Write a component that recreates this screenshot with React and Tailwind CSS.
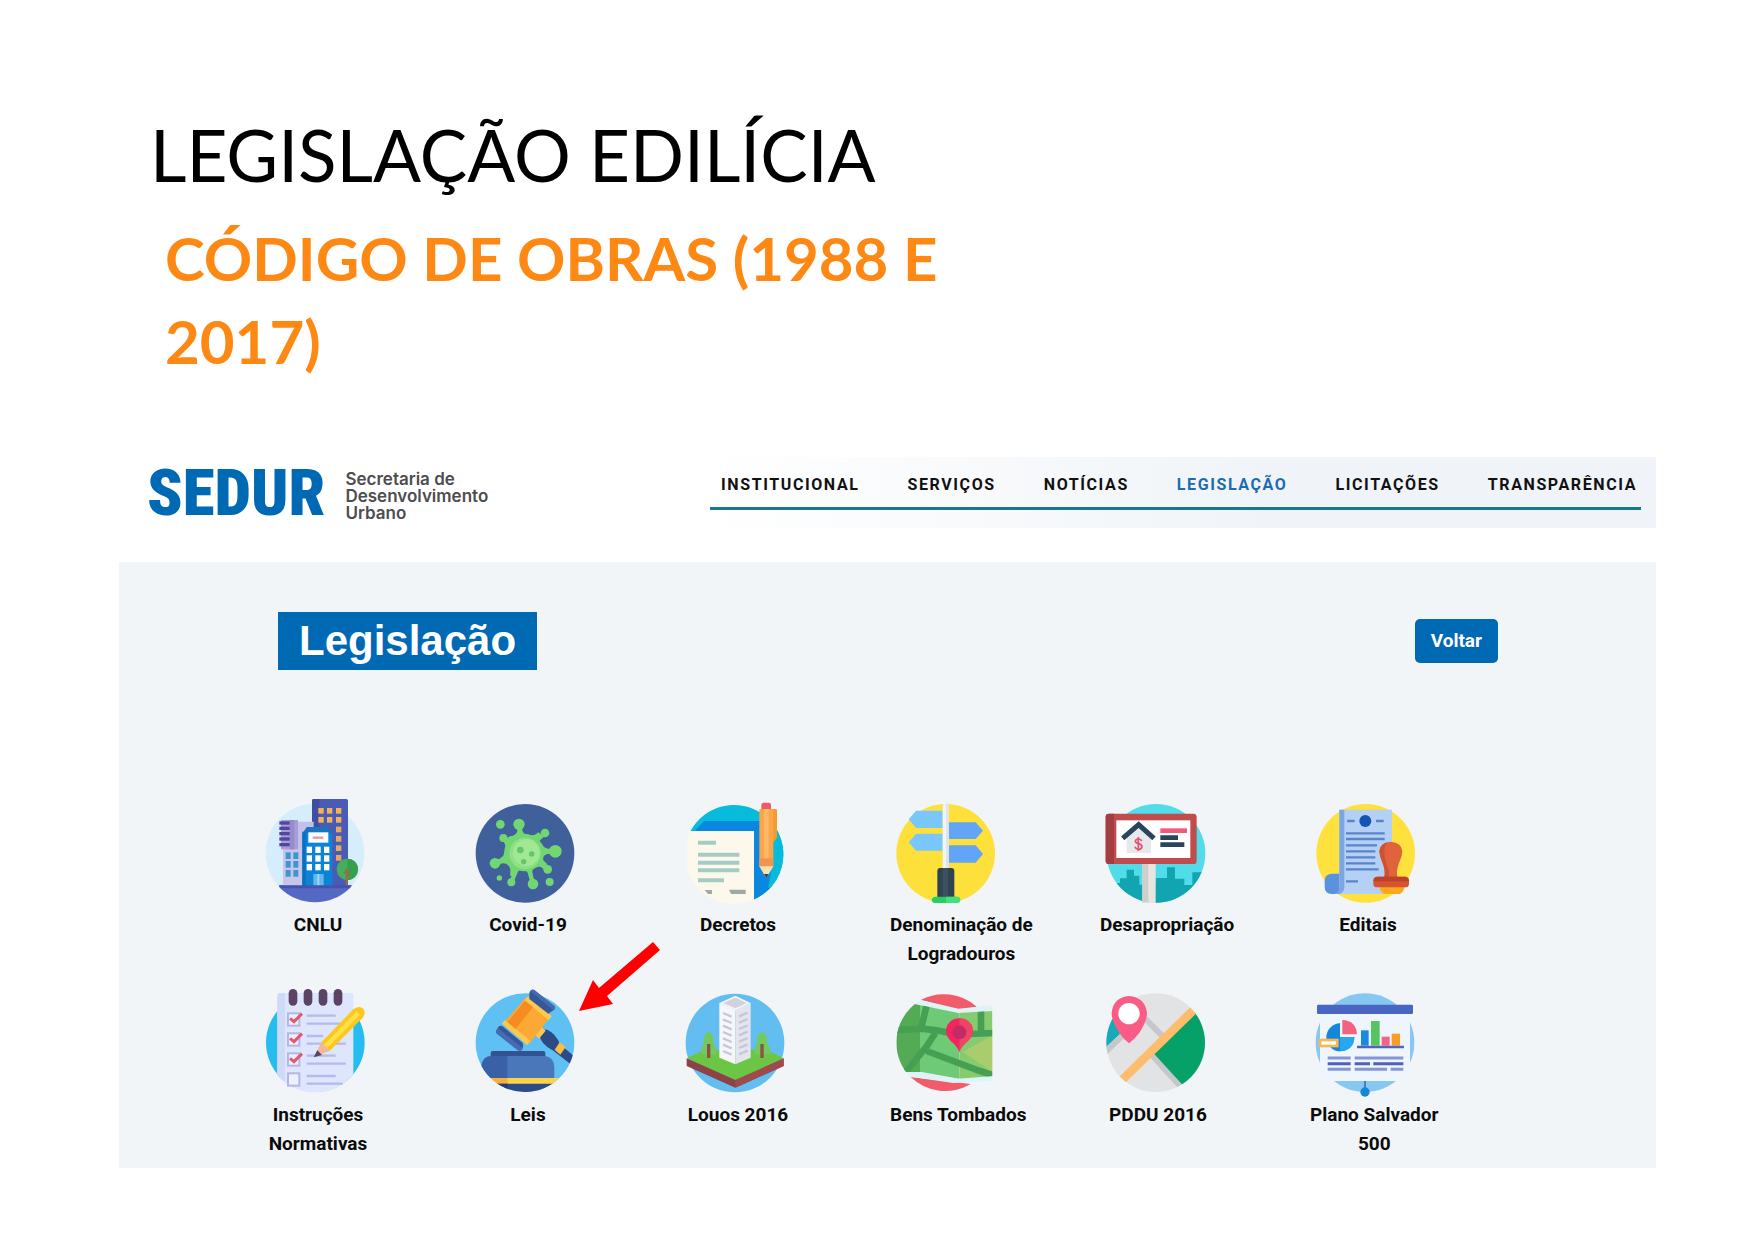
import React from "react";

function Icon({ box, children }) {
  return (
    <svg viewBox={box} className="ml-[5px] block size-[100px] overflow-visible" aria-hidden="true">
      {children}
    </svg>
  );
}

const grid = (xs, ys, w, h, fill) =>
  ys.flatMap((y) => xs.map((x) => <rect key={x + "-" + y} x={x} y={y} width={w} height={h} fill={fill} />));

function BuildingsIcon() {
  return (
    <Icon box="46 66 300 300">
      <clipPath id="cnlu"><circle cx="196" cy="216" r="148" /></clipPath>
      <circle cx="196" cy="216" r="148" fill="#d6edfb" />
      <rect x="88" y="313" width="218" height="60" fill="#5468c4" clipPath="url(#cnlu)" />
      <path d="M187 59q0-5 5-5h98q5 0 5 5v256H187z" fill="#4a5bb5" />
      <path d="M187 59q0-5 5-5h17v90h-22z" fill="#3f4da3" />
      {grid([206, 232, 259], [81, 108], 16, 17, "#f3b25a")}
      {grid([259], [137, 165, 193, 222], 16, 17, "#e8a860")}
      <path d="M145 122h47v192h-47z" fill="#c3bfe8" />
      <rect x="100" y="200" width="62" height="114" fill="#c9c5ea" />
      <rect x="94" y="117" width="51" height="88" fill="#a79ed8" />
      <rect x="120" y="117" width="14" height="88" fill="#958ccd" />
      {grid([89], [121, 137, 153, 169, 186], 31, 10, "#5147a0")}
      {grid([108, 131], [214, 240, 267], 15, 20, "#3b98cf")}
      <path d="M158 158l14-20h64l12 20v157h-90z" fill="#0d83d6" />
      <path d="M158 158l14-20h64l12 20z" fill="#1c74bd" />
      <rect x="158" y="152" width="10" height="163" fill="#0a70c0" />
      <rect x="176" y="154" width="60" height="31" fill="#fff" />
      <path d="M189 170h32" stroke="#e39aa7" strokeWidth="7" />
      {grid([171, 197, 223], [197, 223, 249], 16, 19, "#fff")}
      <rect x="191" y="279" width="31" height="36" fill="#5fb8ee" />
      <path d="M206 279v36" stroke="#9ed7f7" strokeWidth="6" />
      <circle cx="293" cy="265" r="32" fill="#43b05c" />
      <path d="M293 233a32 32 0 0 1 0 64z" fill="#36a04c" />
      <path d="M291 262v52M291 288l10-11M291 280l-8-9" stroke="#9b6b4b" strokeWidth="6" fill="none" />
      <path d="M88 313h218l-6 9H94z" fill="#4453ac" />
    </Icon>
  );
}

function VirusIcon() {
  return (
    <Icon box="675 66 300 300">
      <circle cx="825" cy="217" r="148" fill="#40609c" />
      <g stroke="#72d672" strokeWidth="13" strokeLinecap="round">
        <path d="M822 213L806 130M822 213L885 156M822 213L915 211M822 213L893 265M822 213L849 308M822 213L784 303M822 213L735 247M822 213L761 171" />
      </g>
      <g fill="#72d672">
        <path d="M780 166q20 0 24-22h12q2 18 22 18 14 4 28-8l8 8q-12 14 2 26 4 14 26 16v14q-26 0-22 20l12 12-8 8q-20-4-30 4-12 4-4 24l-12 4q-2-22-20-24-20 0-28 22l-10-5q4-24-6-30-8-12-32-2l-4-12q24-10 24-22 2-14 4-24-2-10-10-14z" />
        <circle cx="824" cy="215" r="56" />
        <circle cx="807" cy="130" r="17" /><circle cx="885" cy="156" r="13" /><circle cx="916" cy="211" r="19" />
        <circle cx="893" cy="265" r="13" /><circle cx="849" cy="309" r="16" /><circle cx="784" cy="304" r="12" />
        <circle cx="735" cy="247" r="16" /><circle cx="760" cy="171" r="12" />
        <circle cx="751" cy="130" r="13" /><circle cx="748" cy="291" r="8" /><circle cx="899" cy="303" r="12" />
      </g>
      <circle cx="825" cy="217" r="47" fill="#8fe085" />
      <circle cx="829" cy="215" r="40" fill="#a0e893" />
      <g fill="#66c56a"><circle cx="811" cy="207" r="10" /><circle cx="845" cy="219" r="8" /><circle cx="821" cy="242" r="8" /></g>
    </Icon>
  );
}

function DecreeIcon() {
  return (
    <Icon box="75 66 300 300">
      <clipPath id="decree"><circle cx="222" cy="220" r="148" /></clipPath>
      <g clipPath="url(#decree)">
        <path d="M70 70h310v305H282V150H70z" fill="#06bcda" />
        <path d="M133 120h190l16 210-50 45h-7V150H104z" fill="#0a87de" />
        <path d="M340 120h40v200h-55l10-60z" fill="#06bcda" />
        <path d="M82 150h200v230H82z" fill="#fdf8ec" />
      </g>
      <g stroke="#a5cbc6" strokeWidth="12"><path d="M114 185h54M114 221h124M114 245h124M114 268h124M114 298h78" /></g>
      <path d="M134 327h22v12h-12zM207 326h50v13h-44z" fill="#a1a9a6" />
      <path d="M338 90l13-4v84l-13 14z" fill="#f08b28" />
      <path d="M330 84h16q5 0 5 5v76q-4 12-12 20z" fill="#f79a2e" />
      <path d="M298 84h42v174h-42z" fill="#fca548" />
      <path d="M312 84h14v174h-14z" fill="#fdb867" />
      <path d="M298 232h42v26h-42z" fill="#f19451" />
      <path d="M298 256h42l-21 36z" fill="#fae1ae" />
      <path d="M312 279h14l-7 13z" fill="#3a3d4b" />
      <path d="M304 84V72q0-7 7-7h15q7 0 7 7v12z" fill="#ee5a69" />
    </Icon>
  );
}

function SignpostIcon() {
  return (
    <Icon box="705 66 300 300">
      <circle cx="857" cy="217" r="148" fill="#fee03b" />
      <path d="M746 115l22-26h80v52h-80zM746 184l22-26h80v51h-80z" fill="#79c7fd" />
      <path d="M866 124h81l22 25-22 25h-81zM866 193h81l22 26-22 26h-81z" fill="#62a5f6" />
      <path d="M848 77q0-9 9-9t9 9v186h-18z" fill="#f2f5f8" />
      <path d="M858 68q8 0 8 9v186h-8z" fill="#dde4ec" />
      <path d="M832 270q0-9 9-9h33q9 0 9 9v80h-51z" fill="#2f4250" />
      <path d="M848 261h16v86h-16z" fill="#3c5160" />
      <path d="M815 357q1-10 12-10h64q9 0 10 10-2 9-10 9h-66q-9 0-10-9z" fill="#27cf63" />
      <path d="M858 347h33q9 0 10 10-2 9-10 9h-33z" fill="#45e07c" />
    </Icon>
  );
}

function BillboardIcon() {
  return (
    <Icon box="75 66 300 300">
      <clipPath id="board"><circle cx="228" cy="217" r="148" /></clipPath>
      <circle cx="228" cy="217" r="148" fill="#52dbe9" />
      <path clipPath="url(#board)" d="M70 370V318h36v-12h14v-14h20v-26h22v18h16v27h49v-20h34v-32h24v34h28v19h24v-38h60v96z" fill="#10a5b0" />
      <path d="M187 245h40v121h-40z" fill="#e8e5e1" />
      <path d="M187 245h18v119h-18z" fill="#d0cecc" />
      <rect x="77" y="98" width="273" height="151" rx="10" fill="#c04c4d" />
      <path d="M87 98h15v151H87q-10 0-10-10V108q0-10 10-10z" fill="#a43d40" />
      <rect x="109" y="118" width="222" height="113" fill="#fff" />
      <path d="M140 170l36-31 37 31v46h-73z" fill="#e6e8ec" />
      <path d="M128 172l48-41 46 41" fill="none" stroke="#29455c" strokeWidth="15" />
      <path d="M185 180q-2-6-10-6-9 1-9 7 0 5 10 7 10 3 10 9-1 8-10 8-9 0-11-8M175 168v42" fill="none" stroke="#e75171" strokeWidth="5" />
      <path d="M241 149h80" stroke="#f05a7e" strokeWidth="14" />
      <path d="M241 170h53M241 191h72" stroke="#29455c" strokeWidth="14" />
    </Icon>
  );
}

function NoticeIcon() {
  return (
    <Icon box="705 66 300 300">
      <circle cx="857" cy="217" r="148" fill="#fee13c" />
      <path d="M755 278h25v61h-25q-21-2-21-22v-18q0-19 21-21z" fill="#5b92dd" />
      <path d="M778 86h158v253H770q10-4 8-22z" fill="#b5d0f5" />
      <path d="M778 86h15v235q-2 15-16 18h-15q16-4 16-20z" fill="#7ba6e4" />
      <circle cx="856" cy="120" r="18" fill="#1553b5" />
      <g stroke="#5a83c9" strokeWidth="7"><path d="M801 120h23M888 120h23M798 157h116M798 174h116M798 193h93M798 211h88M798 229h88M798 247h88M798 265h98M798 301h36" /></g>
      <path d="M898 316h76q-2 16-14 23h-48q-12-7-14-23z" fill="#fca81d" />
      <path d="M913 288q4-20-6-44-9-18-9-34 3-25 34-28 32 3 35 28 0 16-9 34-10 24-6 44z" fill="#e0633c" />
      <path d="M913 288q4-20-6-44-9-18-9-34 3-22 26-27-10 10-11 27 0 30 14 56v22z" fill="#cf5131" />
      <rect x="880" y="287" width="107" height="32" rx="11" fill="#d4552f" />
      <path d="M893 287h84q9 4 10 14H880q1-12 13-14z" fill="#bd4228" />
    </Icon>
  );
}

function ChecklistIcon() {
  return (
    <Icon box="45 186 300 300">
      <circle cx="196" cy="335" r="148" fill="#25bdef" />
      <path d="M90 186h212q8 0 8 8v235q-45 55-114 55-68 0-114-50V194q0-8 8-8z" fill="#dde6fc" />
      <path d="M82 194q0-8 8-8h15v266q-14-10-23-20z" fill="#cfdaf8" />
      <g fill="#5a4364">
        <rect x="116" y="174" width="26" height="50" rx="13" /><rect x="161" y="174" width="26" height="50" rx="13" />
        <rect x="206" y="174" width="26" height="50" rx="13" /><rect x="251" y="174" width="26" height="50" rx="13" />
      </g>
      <g stroke="#b4bbea" strokeWidth="7"><path d="M170 254h87M170 278h118M170 315h50M170 338h118M170 374h87M170 398h118M170 435h87M170 458h108" /></g>
      <g fill="#edf1fd" stroke="#b4b7e4" strokeWidth="6">
        <rect x="114" y="247" width="34" height="37" /><rect x="114" y="307" width="34" height="37" />
        <rect x="114" y="367" width="34" height="37" /><rect x="114" y="427" width="34" height="37" />
      </g>
      <g fill="none" stroke="#e2596e" strokeWidth="9"><path d="M120 262l12 10 24-24M120 322l12 10 24-24M120 382l12 10 24-24" /></g>
      <path d="M214 334l96-99q18-13 30-2 9 14-2 27l-98 99z" fill="#fdc71b" />
      <path d="M222 342l98-101 10 10-98 100z" fill="#fee04a" />
      <path d="M214 334l26 25-48 19z" fill="#f4b795" />
      <path d="M202 358l14 14-25 7z" fill="#5a4364" />
    </Icon>
  );
}

function GavelIcon() {
  return (
    <Icon box="675 186 300 300">
      <clipPath id="gavel"><circle cx="825" cy="335" r="148" /></clipPath>
      <circle cx="825" cy="335" r="148" fill="#5fc1f3" />
      <g clipPath="url(#gavel)">
        <path d="M722 366q0-6 6-6h152q6 0 6 6v14H722z" fill="#345292" />
        <path d="M694 441v-35q3-30 30-31h160q27 3 29 31v35z" fill="#4a77b9" />
        <path d="M694 441v-35q3-30 30-31h48v66z" fill="#3a61a8" />
        <path d="M670 441h300v18H670z" fill="#fbd34a" /><path d="M670 441h103v18H670z" fill="#f7b03c" />
        <path d="M670 458h300v40H670z" fill="#2d4b88" /><path d="M670 458h103v40H670z" fill="#223d75" />
        <path d="M868 308q6-14 24-12 26 12 38 44l45 38-10 24-55-43q-40-20-42-51z" fill="#2b4b87" />
      </g>
      <path d="M914 356l15-22 18 14-16 23z" fill="#fbbd3f" />
      <path d="M847 304l20-23 20 18-20 24z" fill="#fcc850" />
      <path d="M828 199l73 58-64 83-78-62z" fill="#fba835" />
      <path d="M828 207l24 18-64 80-25-21z" fill="#f78b20" />
      <path d="M824 208l10-12 71 59-9 13zM756 278l8-11 77 62-10 13z" fill="#fcc850" />
      <path d="M838 186q4-13 15-9l60 48q6 7-3 13l-15 10-57-44z" fill="#36579b" />
      <path d="M841 180q5-7 12-3l60 48q6 7-3 13z" fill="#466bb0" />
      <path d="M738 299q6-15 18-14l61 50q6 8-1 22-6 6-14 0l-61-48q-5-4-3-10z" fill="#466bb0" />
      <path d="M743 291q5-8 13-6l61 50q4 7 0 15z" fill="#36579b" />
    </Icon>
  );
}

function TowerIcon() {
  return (
    <Icon box="75 66 300 300">
      <circle cx="225" cy="216" r="148" fill="#62bef0" />
      <path d="M80 262l146 60 145-60v23l-145 65-146-65z" fill="#8e4146" />
      <path d="M226 328l145-66v23l-145 65z" fill="#a14a4d" />
      <path d="M80 262l50-24 190-2 51 26-145 65z" fill="#6bc645" />
      <path d="M126 250q-6-14 2-26 4-8 4-20 1-18 14-20 13 2 14 20 0 12 4 20 10 12 4 28zM286 250q-6-14 2-26 4-8 4-20 1-18 14-20 13 2 14 20 0 12 6 20 8 12 2 26z" fill="#74c95c" />
      <path d="M146 219v42M306 219v42" stroke="#8e5049" strokeWidth="10" />
      <path d="M178 96l48 20v164l-48-20z" fill="#f6f6fa" />
      <path d="M226 116l46-20v164l-46 20z" fill="#e4e4ee" />
      <path d="M178 96l48-22 46 22-46 22z" fill="#f4f4f8" />
      <path d="M190 96l36-16 34 16-34 16z" fill="#d0d1da" />
      <g stroke="#c7c7d8" strokeWidth="7">
        {[126, 145, 164, 183, 202, 221, 240].map((y) => (
          <path key={y} d={`M189 ${y}l26 11M237 ${y + 10}l26-11`} />
        ))}
      </g>
    </Icon>
  );
}

function HeritageMapIcon() {
  return (
    <Icon box="75 66 300 300">
      <clipPath id="mapclip"><path d="M227 67h141v296H227a148 148 0 0 1 0-296z" /></clipPath>
      <clipPath id="mapland"><path d="M60 98h70l135 28 103-6v195l-100 8-113-20H60z" /></clipPath>
      <path d="M152 87a148 148 0 0 1 168 20l-55 10zM122 318l128 14 52 7a148 148 0 0 1-180-21z" fill="#f05c6a" />
      <g clipPath="url(#mapclip)">
        <path d="M60 86h90l115 27 103-10v17l-103 8-205-20zM60 298l95 4 113 20 100-8v16l-118 6-125-18-65-10z" fill="#def3f8" />
        <g clipPath="url(#mapland)">
          <path d="M60 80h90v260H60z" fill="#55ab55" />
          <path d="M150 80h118v260H150z" fill="#6fca78" />
          <path d="M268 100h110v230H268z" fill="#86cb70" />
          <path d="M278 243l90-50v110z" fill="#a9cd6c" />
          <g stroke="#45a053" fill="none" strokeWidth="20">
            <path d="M172 95l-19 78M70 178l85-5 45 5 60 12 110-4M196 186l-26 40-62 76M170 240l160 60 50 16M333 115v78" />
          </g>
        </g>
      </g>
      <path d="M268 243q-8-20-26-33-16-16-14-35 7-32 40-33 34 1 41 33 1 20-15 35-19 14-26 33z" fill="#f3245f" />
      <path d="M268 142q34 1 41 33 1 20-15 35-19 14-26 33z" fill="#ef4468" />
      <circle cx="268" cy="184" r="21" fill="#c42a63" />
    </Icon>
  );
}

function StreetMapIcon() {
  return (
    <Icon box="75 66 300 300">
      <clipPath id="street"><circle cx="227" cy="215" r="148" /></clipPath>
      <circle cx="227" cy="215" r="148" fill="#e2e3e5" />
      <g clipPath="url(#street)">
        <path d="M70 150l40-10 10 50-50 45z" fill="#17aab9" />
        <path d="M76 243l52-50M190 138l130 130M205 240l100 110" stroke="#c6c7ca" strokeWidth="18" fill="none" />
        <path d="M222 248L350 122l40 50v120l-82 50z" fill="#06a069" />
        <path d="M120 333L352 106" stroke="#fdbd6d" strokeWidth="26" />
      </g>
      <path d="M147 217q-15-10-28-30-25-38-24-62 5-46 52-50 48 4 54 50 0 26-24 62-15 20-30 30z" fill="#f95d85" />
      <circle cx="147" cy="128" r="32" fill="#fff" />
    </Icon>
  );
}

function PlanIcon() {
  return (
    <Icon box="705 66 300 300">
      <circle cx="855" cy="215" r="148" fill="#86c8f2" />
      <path d="M720 129h270v201H720z" fill="#eef5fd" />
      <rect x="711" y="101" width="288" height="28" rx="4" fill="#4a66c3" />
      <path d="M855 330v22" stroke="#426eb8" strokeWidth="5" />
      <circle cx="855" cy="363" r="14" fill="#1687d4" />
      <path d="M780 157v41h43a42 42 0 1 1-43-41z" fill="#1587d8" />
      <path d="M780 198h43q0 40-43 42z" fill="#27a7ef" />
      <path d="M787 147q42 2 44 43h-44z" fill="#f4637d" />
      <rect x="720" y="207" width="52" height="18" fill="#fff" stroke="#f8b750" strokeWidth="8" />
      <path d="M843 178h23v46h-23z" fill="#178be0" /><path d="M873 150h26v74h-26z" fill="#56c45f" />
      <path d="M905 197h24v27h-24z" fill="#f36586" /><path d="M935 188h25v36h-25z" fill="#fb9d24" />
      <path d="M831 228h141" stroke="#5563b5" strokeWidth="8" />
      <g stroke="#8595d5" strokeWidth="9"><path d="M743 261h69M824 261h146M743 295h69M824 295h97M932 295h38" /></g>
      <path d="M743 278h69M824 278h46M880 278h90" stroke="#4f62b5" strokeWidth="9" />
    </Icon>
  );
}

function Arrow() {
  return (
    <svg viewBox="0 0 84 70" className="absolute -top-[51px] left-[107px] h-[70px] w-[84px]" aria-hidden="true">
      <path d="M2 69L16 38l6 8L76 0l7 8-53 46 6 8z" fill="#fe0000" />
    </svg>
  );
}

const items = [
  { lines: ["CNLU"], icon: <BuildingsIcon /> },
  { lines: ["Covid-19"], icon: <VirusIcon /> },
  { lines: ["Decretos"], icon: <DecreeIcon /> },
  { lines: ["Denominação de", "Logradouros"], icon: <SignpostIcon /> },
  { lines: ["Desapropriação"], icon: <BillboardIcon /> },
  { lines: ["Editais"], icon: <NoticeIcon /> },
  { lines: ["Instruções", "Normativas"], icon: <ChecklistIcon /> },
  { lines: ["Leis"], icon: <GavelIcon />, marked: true },
  { lines: ["Louos 2016"], icon: <TowerIcon /> },
  { lines: ["Bens Tombados"], icon: <HeritageMapIcon /> },
  { lines: ["PDDU 2016"], icon: <StreetMapIcon /> },
  { lines: ["Plano Salvador", "500"], icon: <PlanIcon /> },
];

const nav = ["INSTITUCIONAL", "SERVIÇOS", "NOTÍCIAS", "LEGISLAÇÃO", "LICITAÇÕES", "TRANSPARÊNCIA"];

export default function App() {
  return (
    <main className="min-h-screen bg-white pt-[115px] pr-[99px] pb-[73px] pl-[119px] font-['Roboto',sans-serif]">
      <h1 className="pl-[31px] font-['Lato',sans-serif] text-[71px] leading-[80px] text-black">LEGISLAÇÃO EDILÍCIA</h1>
      <h2 className="mt-[22px] pl-[46px] font-['Lato',sans-serif] text-[60px] leading-[83px] font-bold text-[#fd8814]">
        CÓDIGO DE OBRAS (1988 E
        <br />
        2017)
      </h2>

      <header className="mt-[74px] flex h-[71px] items-stretch justify-between">
        <a href="#inicio" className="flex items-center gap-5 pl-7">
          <span className="font-['Roboto_Condensed','Open_Sans_Condensed','Roboto',sans-serif] text-[65px] leading-[70px] font-black text-[#0069b4]">SEDUR</span>
          <span className="pt-2 font-['Inter',sans-serif] text-[17px] leading-[17px] font-semibold text-[#4d4d4f]">
            Secretaria de
            <br />
            Desenvolvimento
            <br />
            Urbano
          </span>
        </a>
        <nav className="bg-linear-to-r from-white to-[#f0f4f8] to-60% pr-[15px] pl-3">
          <ul className="flex gap-12 border-b-3 border-[#1b7690] pt-4 pr-1 pb-[10px] pl-[11px]">
            {nav.map((label) => (
              <li key={label}>
                <a
                  href={"#" + label.toLowerCase()}
                  className={
                    label === "LEGISLAÇÃO"
                      ? "block text-[16px] leading-[24px] font-bold tracking-widest whitespace-nowrap text-[#1b6cb0]"
                      : "block text-[16px] leading-[24px] font-bold tracking-widest whitespace-nowrap text-[#111]"
                  }
                >
                  {label}
                </a>
              </li>
            ))}
          </ul>
        </nav>
      </header>

      <section className="mt-[34px] bg-[#f1f5f8] pt-[50px] pr-[136px] pb-[9px] pl-[141px]">
        <div className="flex items-center justify-between pr-[22px] pl-[18px]">
          <h3 className="bg-[#0069b4] px-[21px] font-['Liberation_Sans',sans-serif] text-[42px] leading-[58px] font-bold text-white">Legislação</h3>
          <button type="button" className="rounded-[5px] bg-[#0069b4] px-4 py-2 text-[19px] leading-[28px] font-bold text-white">
            Voltar
          </button>
        </div>
        <ul className="mt-[133px] grid grid-cols-6 gap-y-6">
          {items.map((item) => (
            <li key={item.lines[0]} className="relative min-h-[166px]">
              <a href={"#" + item.lines[0].toLowerCase()} className="block w-fit min-w-[116px]">
                {item.icon}
                <span className="mt-[7px] block text-center text-[19px] leading-[29px] font-bold whitespace-nowrap text-[#0b0b0b]">
                  {item.lines.map((line) => (
                    <span key={line} className="block">
                      {line}
                    </span>
                  ))}
                </span>
              </a>
              {item.marked && <Arrow />}
            </li>
          ))}
        </ul>
      </section>
    </main>
  );
}
